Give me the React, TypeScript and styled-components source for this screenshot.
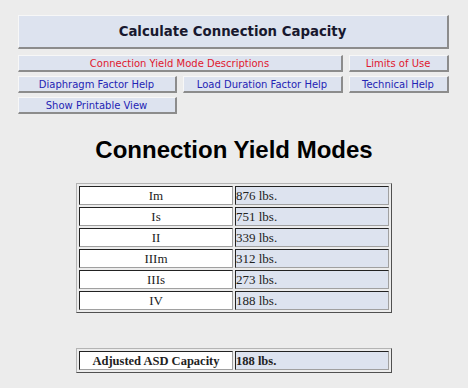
import React from "react";
import styled, { createGlobalStyle } from "styled-components";

const GlobalStyle = createGlobalStyle`
  body {
    margin: 0;
    background: #ececec;
    font-family: "DejaVu Sans", Verdana, sans-serif;
  }
`;

const Page = styled.div`
  width: 468px;
  padding-top: 15px;
  display: flex;
  flex-direction: column;
  align-items: center;
`;

const Menu = styled.div`
  width: 432px;
  display: grid;
  grid-template-columns: 159px 160px 100px;
  column-gap: 6px;
  row-gap: 4px;
  margin-left: -1px;
`;

const Button = styled.div<{ $tone?: "red" | "blue" | "dark"; $span?: number }>`
  grid-column: span ${(p) => p.$span ?? 1};
  box-sizing: border-box;
  height: ${(p) => (p.$tone === "dark" ? "34px" : "17px")};
  margin-bottom: ${(p) => (p.$tone === "dark" ? "2px" : "0")};
  background: #dde3ef;
  border-top: 1px solid #f7f7f7;
  border-left: 1px solid #f7f7f7;
  border-right: 2px solid #8c8c8c;
  border-bottom: 2px solid #8c8c8c;
  display: flex;
  align-items: center;
  justify-content: center;
  font-size: ${(p) => (p.$tone === "dark" ? "13.3px" : "10px")};
  font-weight: ${(p) => (p.$tone === "dark" ? "bold" : "normal")};
  color: ${(p) =>
    p.$tone === "red" ? "#e0182e" : p.$tone === "blue" ? "#2424b4" : "#18182e"};
  white-space: nowrap;
`;

const Title = styled.h1`
  margin: 22px 0 0;
  font-family: "Liberation Sans", Arial, sans-serif;
  font-size: 24px;
  font-weight: bold;
  color: #000;
  line-height: 28px;
`;

const Table = styled.table<{ $bold?: boolean }>`
  width: 316px;
  border-collapse: separate;
  border-spacing: 2px;
  border-top: 1px solid #b4b4b4;
  border-left: 1px solid #b4b4b4;
  border-right: 1px solid #505050;
  border-bottom: 1px solid #505050;
  font-family: "Liberation Serif", "Times New Roman", serif;
  font-size: ${(p) => (p.$bold ? "12.5px" : "13px")};
  font-weight: ${(p) => (p.$bold ? "bold" : "normal")};
  color: #222;
  table-layout: fixed;
`;

const Cell = styled.td<{ $value?: boolean }>`
  box-sizing: border-box;
  height: 19px;
  padding: 0;
  border-top: 1px solid #222;
  border-left: 1px solid #222;
  border-right: 1px solid #a0a0a0;
  border-bottom: 1px solid #a0a0a0;
  background: ${(p) => (p.$value ? "#dde3ef" : "#ffffff")};
  text-align: ${(p) => (p.$value ? "left" : "center")};
  line-height: 16px;
  white-space: nowrap;
`;

const modes = [
  ["Im", "876 lbs."],
  ["Is", "751 lbs."],
  ["II", "339 lbs."],
  ["IIIm", "312 lbs."],
  ["IIIs", "273 lbs."],
  ["IV", "188 lbs."],
];

const ModesWrap = styled.div`
  margin-top: 19px;
`;

const CapacityWrap = styled.div`
  margin-top: 35px;
`;

export default function App() {
  return (
    <>
      <GlobalStyle />
      <Page>
        <Menu>
          <Button $tone="dark" $span={3}>
            Calculate Connection Capacity
          </Button>
          <Button $tone="red" $span={2}>
            Connection Yield Mode Descriptions
          </Button>
          <Button $tone="red">Limits of Use</Button>
          <Button $tone="blue">Diaphragm Factor Help</Button>
          <Button $tone="blue">Load Duration Factor Help</Button>
          <Button $tone="blue">Technical Help</Button>
          <Button $tone="blue">Show Printable View</Button>
        </Menu>
        <Title>Connection Yield Modes</Title>
        <ModesWrap>
          <Table>
            <tbody>
              {modes.map(([mode, value]) => (
                <tr key={mode}>
                  <Cell>{mode}</Cell>
                  <Cell $value>{value}</Cell>
                </tr>
              ))}
            </tbody>
          </Table>
        </ModesWrap>
        <CapacityWrap>
          <Table $bold>
            <tbody>
              <tr>
                <Cell>Adjusted ASD Capacity</Cell>
                <Cell $value>188 lbs.</Cell>
              </tr>
            </tbody>
          </Table>
        </CapacityWrap>
      </Page>
    </>
  );
}
